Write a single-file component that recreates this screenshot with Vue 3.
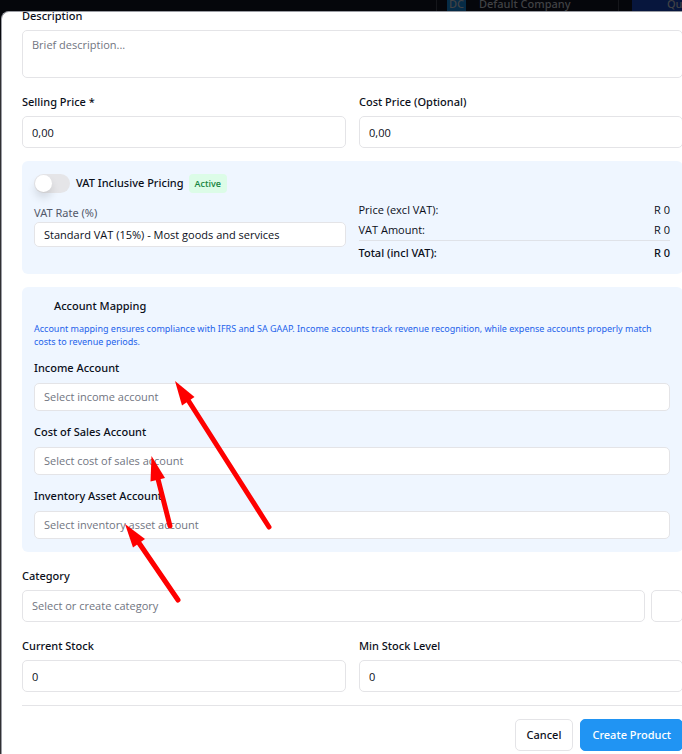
<script setup>
import { ref } from 'vue'

const description = ref('')
const sellingPrice = ref('0,00')
const costPrice = ref('0,00')
const vatInclusive = ref(false)
const vatRate = ref('standard')
const category = ref('')
const currentStock = ref('0')
const minStock = ref('0')

const totals = [
  { label: 'Price (excl VAT):', value: 'R 0' },
  { label: 'VAT Amount:', value: 'R 0' },
  { label: 'Total (incl VAT):', value: 'R 0', total: true },
]

const accounts = ref([
  { id: 'income', label: 'Income Account', placeholder: 'Select income account', value: '' },
  { id: 'cost-of-sales', label: 'Cost of Sales Account', placeholder: 'Select cost of sales account', value: '' },
  { id: 'inventory', label: 'Inventory Asset Account', placeholder: 'Select inventory asset account', value: '' },
])
</script>

<template>
  <div class="page">
    <header class="topbar">
      <div class="company">
        <span class="initials">DC</span>
        <span>Default Company</span>
      </div>
      <div class="quick">Qu</div>
    </header>

    <main class="dialog">
      <form class="form" @submit.prevent>
        <div class="field">
          <label for="description">Description</label>
          <textarea id="description" v-model="description" class="control area" placeholder="Brief description..."></textarea>
        </div>

        <div class="pair">
          <div class="field">
            <label for="selling">Selling Price *</label>
            <input id="selling" v-model="sellingPrice" class="control" type="text" />
          </div>
          <div class="field">
            <label for="cost">Cost Price (Optional)</label>
            <input id="cost" v-model="costPrice" class="control" type="text" />
          </div>
        </div>

        <section class="panel vat">
          <div class="switch-row">
            <input id="vat-inclusive" v-model="vatInclusive" class="switch" type="checkbox" role="switch" />
            <label for="vat-inclusive">VAT Inclusive Pricing</label>
            <span class="badge">Active</span>
          </div>
          <div class="pair">
            <div class="rate">
              <label for="vat-rate">VAT Rate (%)</label>
              <select id="vat-rate" v-model="vatRate" class="control slim">
                <option value="standard">Standard VAT (15%) - Most goods and services</option>
              </select>
            </div>
            <dl class="totals">
              <div v-for="row in totals" :key="row.label" class="total-row" :class="{ grand: row.total }">
                <dt>{{ row.label }}</dt>
                <dd>{{ row.value }}</dd>
              </div>
            </dl>
          </div>
        </section>

        <section class="panel mapping">
          <div class="intro">
            <h3>Account Mapping</h3>
            <p>Account mapping ensures compliance with IFRS and SA GAAP. Income accounts track revenue recognition, while expense accounts properly match costs to revenue periods.</p>
          </div>
          <div class="accounts">
            <div v-for="account in accounts" :key="account.id" class="field">
              <label :for="account.id">{{ account.label }}</label>
              <select :id="account.id" v-model="account.value" class="control medium empty">
                <option value="">{{ account.placeholder }}</option>
              </select>
            </div>
          </div>
        </section>

        <div class="field">
          <label for="category">Category</label>
          <div class="category-row">
            <select id="category" v-model="category" class="control empty">
              <option value="">Select or create category</option>
            </select>
            <button class="control add" type="button"></button>
          </div>
        </div>

        <div class="pair">
          <div class="field">
            <label for="stock">Current Stock</label>
            <input id="stock" v-model="currentStock" class="control" type="text" />
          </div>
          <div class="field">
            <label for="min-stock">Min Stock Level</label>
            <input id="min-stock" v-model="minStock" class="control" type="text" />
          </div>
        </div>

        <footer class="actions">
          <button class="button" type="button">Cancel</button>
          <button class="button primary" type="submit">Create Product</button>
        </footer>
      </form>
    </main>

    <svg class="arrows" width="682" height="754" viewBox="0 0 682 754" fill="#fe0000" stroke="#fe0000" aria-hidden="true">
      <g stroke-width="5" stroke-linecap="round">
        <path d="M188 400L269 527" />
        <path d="M158 479L170 526" />
        <path d="M139 543L178 600" />
      </g>
      <g stroke="none">
        <path d="M175 381L194.500 397L182 405.500Z" />
        <path d="M151.500 456L165 478L150.500 481.500Z" />
        <path d="M125 524L145 539L133 547.500Z" />
      </g>
    </svg>
  </div>
</template>

<style>
body {
  margin: 0;
  background: #303033;
}
</style>

<style scoped>
.page {
  position: relative;
  min-height: 100vh;
  overflow: hidden;
  box-sizing: border-box;
  font-family: "Open Sans", "Noto Sans", sans-serif;
  font-size: 11px;
  line-height: 20px;
  color: #0b0f1a;
}
.page * {
  box-sizing: border-box;
}
.topbar {
  display: flex;
  justify-content: flex-end;
  gap: 13px;
  height: 40px;
  margin-bottom: -29px;
  background: #05060b;
  color: #414245;
  font-family: "Noto Sans", sans-serif;
  font-weight: 500;
  line-height: 8px;
}
.company {
  display: flex;
  gap: 13px;
  width: 183px;
  padding-left: 10px;
  border: solid #15161b;
  border-width: 0 1px;
}
.initials {
  width: 19px;
  background: #062b46;
  text-align: center;
}
.quick {
  width: 50px;
  padding-left: 35px;
  background: #07163d;
  overflow: hidden;
}
.dialog {
  position: relative;
  min-height: calc(100vh - 11px);
  margin: 0 -1px 0 1px;
  padding: 0 0 3px 20px;
  border: solid #9a9ca3;
  border-width: 1px 0 0 1px;
  border-radius: 8px 0 0 0;
  background: #fff;
  overflow: hidden;
}
.form {
  display: flex;
  flex-direction: column;
  gap: 13px;
  margin-top: -7px;
}
.field {
  display: flex;
  flex-direction: column;
  gap: 4px;
  min-width: 0;
  padding-top: 1px;
}
label,
.mapping h3 {
  font-family: "Noto Sans", sans-serif;
  font-weight: 500;
}
.pair {
  display: grid;
  grid-template-columns: 1fr 1fr;
  gap: 13px;
}
.control {
  display: block;
  width: 100%;
  height: 32px;
  margin: 0;
  padding: 0 9px;
  border: 1px solid #e4e4e7;
  border-radius: 5px;
  background: #fff;
  color: #0b0f1a;
  font: inherit;
  appearance: none;
  outline: none;
}
.area {
  height: 48px;
  padding: 4px 9px;
  resize: none;
}
.control::placeholder,
.empty {
  color: #71757f;
  opacity: 1;
}
.medium {
  height: 28px;
}
.slim {
  height: 25px;
}
.panel {
  padding: 12px 13px 12px 12px;
  border-radius: 6px;
  background: #eff6ff;
}
.vat {
  display: flex;
  flex-direction: column;
  gap: 7px;
  padding-bottom: 11px;
}
.switch-row {
  display: flex;
  align-items: center;
  gap: 5px;
}
.switch {
  width: 36px;
  height: 19px;
  margin: 0 1px 0 0;
  padding: 1px;
  border-radius: 10px;
  background: #e5e5e8;
  appearance: none;
}
.switch::before {
  content: "";
  display: block;
  width: 17px;
  height: 17px;
  border-radius: 50%;
  background: #fff;
  box-shadow: 0 6px 8px rgba(0, 0, 0, 0.12);
}
.switch:checked {
  background: #2094f3;
}
.switch:checked::before {
  margin-left: auto;
}
.badge {
  padding: 0 6px;
  border-radius: 4px;
  background: #dcfce7;
  color: #188543;
  font-size: 9px;
  font-weight: 600;
  line-height: 19px;
}
.rate {
  display: flex;
  flex-direction: column;
  padding-top: 4px;
  line-height: 18px;
  color: #53596a;
}
.rate label {
  font-weight: 400;
}
.totals {
  margin: 0;
}
.total-row {
  display: flex;
  justify-content: space-between;
}
.total-row dd {
  margin: 0;
  font-weight: 500;
}
.grand {
  padding-top: 2px;
  border-top: 1px solid #dfe2e8;
  font-family: "Noto Sans", sans-serif;
  font-weight: 500;
}
.mapping {
  display: flex;
  flex-direction: column;
  gap: 10px;
  padding-bottom: 13px;
}
.intro {
  display: flex;
  flex-direction: column;
  gap: 9px;
}
.accounts {
  display: flex;
  flex-direction: column;
  gap: 11px;
}
.accounts .field {
  gap: 5px;
  padding-top: 0;
}
.mapping h3 {
  margin: 0;
  padding-left: 20px;
  font-size: 11px;
  line-height: 14px;
}
.mapping p {
  margin: 0;
  color: #2463eb;
  font-family: "Noto Sans", sans-serif;
  font-size: 9px;
  line-height: 13px;
}
.category-row {
  display: flex;
  gap: 6px;
}
.add {
  flex: 0 0 32px;
}
.actions {
  display: flex;
  justify-content: flex-end;
  gap: 7px;
  padding-top: 13px;
  border-top: 1px solid #e4e4e7;
}
.button {
  height: 32px;
  margin: 0;
  padding: 0 11px;
  border: 1px solid #e4e4e7;
  border-radius: 5px;
  background: #fff;
  color: #0b0f1a;
  font: inherit;
  font-family: "Noto Sans", sans-serif;
  font-weight: 500;
}
.primary {
  border-color: #2094f3;
  background: #2094f3;
  color: #fff;
}
.arrows {
  position: absolute;
  top: 0;
  left: 0;
  pointer-events: none;
}
</style>
